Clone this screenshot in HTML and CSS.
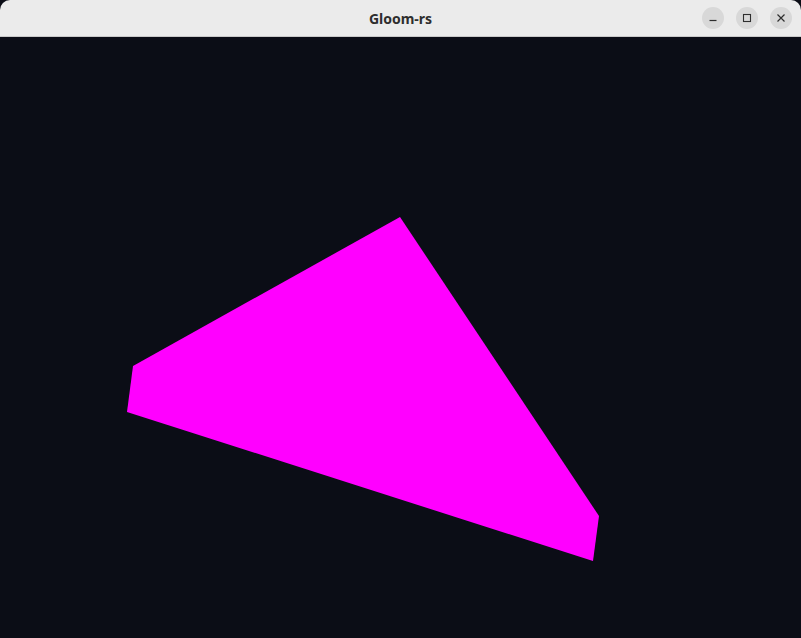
FILE: index.html
```html
<!DOCTYPE html>
<html>
<head>
<meta charset="utf-8">
<link rel="stylesheet" href="styles.css">
</head>
<body>
<div class="window">
  <header class="titlebar">
    <div class="title">Gloom-rs</div>
    <div class="controls">
      <span class="btn"><svg width="10" height="10" viewBox="0 0 10 10"><path d="M1.5 7.5h7" stroke="#2e2e2e" stroke-width="1.2"/></svg></span>
      <span class="btn"><svg width="10" height="10" viewBox="0 0 10 10"><rect x="1.5" y="1.5" width="7" height="7" fill="none" stroke="#2e2e2e" stroke-width="1.1"/></svg></span>
      <span class="btn"><svg width="10" height="10" viewBox="0 0 10 10"><path d="M1.5 1.5l7 7M8.5 1.5l-7 7" stroke="#2e2e2e" stroke-width="1.2"/></svg></span>
    </div>
  </header>
  <main class="viewport">
    <svg class="scene" viewBox="0 37 801 601" width="801" height="601">
      <polygon points="400,217 599,516 593,561 127,412 133,366" fill="#ff00ff"/>
    </svg>
  </main>
</div>
</body>
</html>
```
FILE: styles.css
```css
html, body {
  margin: 0;
  padding: 0;
  background: #0b0d16;
  width: 801px;
  height: 638px;
  overflow: hidden;
}
.window {
  display: flex;
  flex-direction: column;
  width: 801px;
  height: 638px;
}
.titlebar {
  height: 36px;
  background: #ebebeb;
  border-bottom: 1px solid #c9c9c9;
  border-radius: 10px 10px 0 0;
  display: flex;
  align-items: center;
  justify-content: center;
  position: relative;
  flex: none;
}
.title {
  font-family: "Noto Sans", "DejaVu Sans", sans-serif;
  font-weight: 700;
  font-size: 14px;
  color: #2e2e2e;
  letter-spacing: 0;
}
.controls {
  position: absolute;
  right: 9px;
  top: 7px;
  display: flex;
  gap: 12px;
}
.btn {
  width: 22px;
  height: 22px;
  border-radius: 50%;
  background: #d8d8d8;
  display: flex;
  align-items: center;
  justify-content: center;
}
.viewport {
  flex: 1;
  background: #0b0d16;
}
.scene {
  display: block;
}
```
